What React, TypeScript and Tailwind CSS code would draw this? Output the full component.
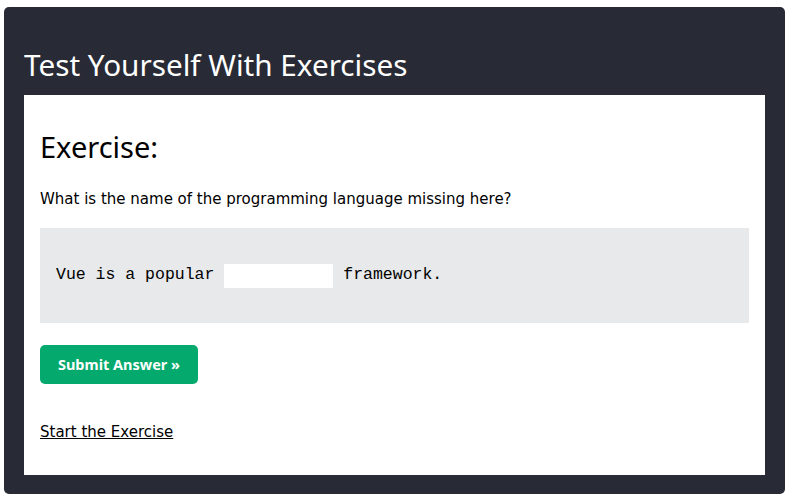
export default function App() {
  return (
    <div className="w-[787px] h-[498px] bg-white pt-[7px] pl-[4px]">
      <div className="w-[781px] h-[487px] bg-[#282A35] rounded-[5px] px-[20px] pb-[19px] flex flex-col">
        <h2 className="h-[88px] flex items-end pb-[15px] text-white text-[29.7px] leading-none font-['Noto_Sans',sans-serif]">
          Test Yourself With Exercises
        </h2>
        <div className="flex-1 bg-white px-[16px] pt-[32px]">
          <h3 className="text-black text-[29px] leading-[40px] font-['Noto_Sans',sans-serif]">Exercise:</h3>
          <p className="mt-[20px] text-black text-[15px] leading-[24px] font-['DejaVu_Sans',sans-serif]">
            What is the name of the programming language missing here?
          </p>
          <div className="mt-[17px] h-[95px] bg-[#E7E9EB] px-[16px] flex items-center font-['Liberation_Mono',monospace] text-[16.5px] text-black whitespace-pre">
            <span>Vue is a popular </span>
            <input className="w-[109px] h-[24px] bg-white outline-none border-0" />
            <span> framework.</span>
          </div>
          <button className="mt-[22px] w-[158px] h-[39px] rounded-[5px] bg-[#04AA6D] text-white font-bold text-[14.5px] font-['Noto_Sans',sans-serif]">
            Submit Answer »
          </button>
          <div className="mt-[35px]">
            <a href="#" className="underline text-black text-[15px] font-['DejaVu_Sans',sans-serif]">
              Start the Exercise
            </a>
          </div>
        </div>
      </div>
    </div>
  );
}
